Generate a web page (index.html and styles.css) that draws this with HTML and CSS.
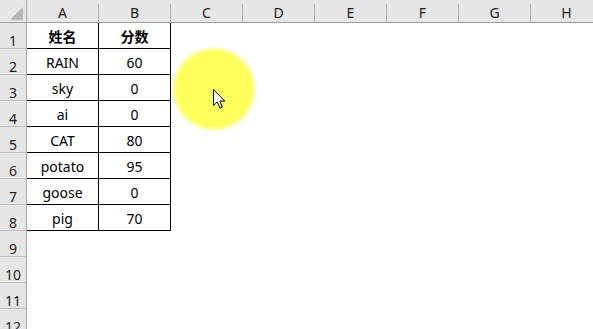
FILE: index.html
```html
<!DOCTYPE html>
<html lang="zh">
<head>
<meta charset="utf-8">
<link rel="stylesheet" href="styles.css">
</head>
<body>
<div class="sheet">
  <div class="corner"><span class="tri"></span></div>
  <div class="colhead">A</div>
  <div class="colhead">B</div>
  <div class="colhead">C</div>
  <div class="colhead">D</div>
  <div class="colhead">E</div>
  <div class="colhead">F</div>
  <div class="colhead">G</div>
  <div class="colhead">H</div>

  <div class="rowhead">1</div>
  <div class="cell t bold">姓名</div><div class="cell t bold">分数</div><div class="blank wide"></div>

  <div class="rowhead">2</div>
  <div class="cell t">RAIN</div><div class="cell t">60</div><div class="blank wide"></div>

  <div class="rowhead">3</div>
  <div class="cell t">sky</div><div class="cell t">0</div><div class="blank wide"></div>

  <div class="rowhead">4</div>
  <div class="cell t">ai</div><div class="cell t">0</div><div class="blank wide"></div>

  <div class="rowhead">5</div>
  <div class="cell t">CAT</div><div class="cell t">80</div><div class="blank wide"></div>

  <div class="rowhead">6</div>
  <div class="cell t">potato</div><div class="cell t">95</div><div class="blank wide"></div>

  <div class="rowhead">7</div>
  <div class="cell t">goose</div><div class="cell t">0</div><div class="blank wide"></div>

  <div class="rowhead">8</div>
  <div class="cell t">pig</div><div class="cell t">70</div><div class="blank wide"></div>

  <div class="rowhead">9</div><div class="blank full"></div>
  <div class="rowhead">10</div><div class="blank full"></div>
  <div class="rowhead">11</div><div class="blank full"></div>
  <div class="rowhead">12</div><div class="blank full"></div>
</div>

<div class="highlight"></div>
<svg class="cursor" width="13" height="21" viewBox="0 0 13 21">
  <path d="M0.5 0.5 L0.5 16.5 L4.3 12.9 L6.9 19.2 L9.3 18.2 L6.8 12.1 L11.8 12.1 Z" fill="#fff" stroke="#000" stroke-width="1" stroke-linejoin="miter"/>
</svg>
</body>
</html>
```

FILE: styles.css
```css
html, body {
  margin: 0;
  padding: 0;
  background: #fff;
  overflow: hidden;
  width: 593px;
  height: 329px;
}

body {
  position: relative;
  font-family: "Noto Sans", "Noto Sans CJK SC", sans-serif;
  font-size: 14px;
  color: #000;
}

.sheet {
  display: grid;
  grid-template-columns: 27px repeat(8, 72px);
  grid-template-rows: 23px repeat(12, 26px);
  width: 603px;
}

.corner {
  background: #e6e6e6;
  border-right: 1px solid #ababab;
  border-bottom: 1px solid #9f9f9f;
  box-sizing: border-box;
  position: relative;
}

.tri {
  position: absolute;
  left: 10px;
  top: 7px;
  width: 0;
  height: 0;
  border-left: 13px solid transparent;
  border-bottom: 13px solid #b7b7b7;
}

.colhead {
  background: #e6e6e6;
  border-bottom: 1px solid #9f9f9f;
  box-sizing: border-box;
  position: relative;
  display: flex;
  align-items: flex-end;
  justify-content: center;
  line-height: 19px;
  color: #222;
  padding-right: 1px;
}

.colhead::after {
  content: "";
  position: absolute;
  right: 0;
  top: 4px;
  bottom: 0;
  width: 1px;
  background: #b3b3b3;
}

.rowhead {
  grid-column: 1;
  background: #e6e6e6;
  border-right: 1px solid #a6a6a6;
  border-bottom: 1px solid #bdbdbd;
  box-sizing: border-box;
  display: flex;
  align-items: flex-end;
  justify-content: center;
  line-height: 15px;
  color: #222;
  padding-bottom: 0;
}

.cell {
  box-sizing: border-box;
  border-right: 1px solid #000;
  border-bottom: 1px solid #000;
  display: flex;
  align-items: center;
  justify-content: center;
  line-height: 19px;
  padding-top: 1px;
}

.bold {
  font-family: "Noto Sans CJK SC", sans-serif;
  font-weight: bold;
}

.blank.wide {
  grid-column: 4 / span 6;
}

.blank.full {
  grid-column: 2 / span 8;
}

.highlight {
  position: absolute;
  left: 171px;
  top: 46px;
  width: 86px;
  height: 86px;
  border-radius: 50%;
  background: radial-gradient(circle closest-side, #ffff5c 0%, #ffff5c 86%, rgba(255,255,100,0.55) 94%, rgba(255,255,140,0) 100%);
}

.cursor {
  position: absolute;
  left: 213px;
  top: 89px;
}
```
